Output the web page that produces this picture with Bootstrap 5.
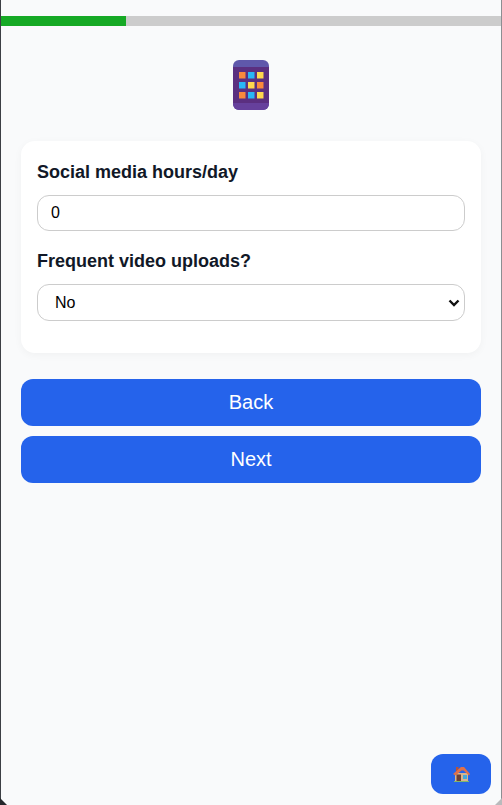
<!DOCTYPE html>
<html lang="en">
<head>
  <meta charset="UTF-8" />
  <meta name="viewport" content="width=device-width, initial-scale=1" />
  <title>Device usage</title>
  <link href="https://cdn.jsdelivr.net/npm/bootstrap@5.3.2/dist/css/bootstrap.min.css" rel="stylesheet" />
  <style>
    html, body { height: 100%; }
    body {
      background: #f9fafb;
      font-family: "Liberation Sans", Arial, sans-serif;
      color: #111827;
      border-left: 1px solid #3c3f44;
      border-right: 1px solid #8c8e92;
      padding-top: 16px;
      overflow: hidden;
    }
    .step-track { height: 10px; background: #cccccc; border-radius: 0; margin-left: -1px; }
    .step-fill { background: #16a925; }
    .page-icon { margin-top: 34px; height: 50px; }
    .form-panel {
      margin: 31px 20px 0;
      padding: 21px 16px 32px;
      background: #fff;
      border-radius: 14px;
      box-shadow: 0 2px 8px rgba(0, 0, 0, .04);
    }
    .field-label { font-size: 18px; font-weight: 700; line-height: 21px; margin-bottom: 12px; display: block; }
    .field-input {
      height: 36px;
      padding: 0 13px;
      font-size: 16px;
      color: #000;
      border: 1px solid #cccccc;
      border-radius: 12px;
      margin-bottom: 20px;
    }
    select.field-input {
      height: 37px;
      padding: 0 13px 0 17px;
      margin-bottom: 0;
      background-position: right 2px center;
      background-size: 16px 12px;
      background-image: url("data:image/svg+xml,%3csvg xmlns='http://www.w3.org/2000/svg' viewBox='0 0 16 12'%3e%3cpath fill='none' stroke='%23111' stroke-width='2.4' d='M3.5 3.5 8 8l4.500-4.500'/%3e%3c/svg%3e");
    }
    .action-stack { margin: 26px 20px 0; gap: 10px; }
    .action-btn {
      height: 47px;
      padding: 0 0 2px;
      font-size: 20px;
      color: #fff;
      background: #2563eb;
      border: 0;
      border-radius: 12px;
    }
    .home-btn {
      position: fixed;
      right: 11px;
      bottom: 11px;
      width: 60px;
      height: 40px;
      padding: 0;
      background: #2563eb;
      border: 0;
      border-radius: 12px;
    }
    .corner-left, .corner-right {
      position: fixed;
      bottom: 0;
      width: 7px;
      height: 7px;
    }
    .corner-left { left: 0; background: #24272b; clip-path: polygon(0 0, 100% 100%, 0 100%); }
    .corner-right { right: 0; background: #b9babc; clip-path: polygon(100% 0, 100% 100%, 0 100%); }
  </style>
</head>
<body>
  <div class="progress step-track">
    <div class="progress-bar step-fill" style="width: 25.2%"></div>
  </div>

  <div class="page-icon d-flex justify-content-center">
    <svg width="36" height="50" viewBox="0 0 36 50" aria-hidden="true">
      <rect width="36" height="50" rx="6" fill="#5f58ab"/>
      <rect y="7" width="36" height="36" fill="#5b2f80"/>
      <path d="M0 43h36v1a6 6 0 0 1-6 6H6a6 6 0 0 1-6-6z" fill="#66409c"/>
      <rect x="6" y="12" width="6.500" height="6.500" fill="#f98a3c"/>
      <rect x="15" y="12" width="6.500" height="6.500" fill="#29b6f6"/>
      <rect x="24" y="12" width="6.500" height="6.500" fill="#ffd84d"/>
      <rect x="6" y="22" width="6.500" height="6.500" fill="#29b6f6"/>
      <rect x="15" y="22" width="6.500" height="6.500" fill="#ffd84d"/>
      <rect x="24" y="22" width="6.500" height="6.500" fill="#f98a3c"/>
      <rect x="6" y="32" width="6.500" height="6.500" fill="#f98a3c"/>
      <rect x="15" y="32" width="6.500" height="6.500" fill="#29b6f6"/>
      <rect x="24" y="32" width="6.500" height="6.500" fill="#ffd84d"/>
    </svg>
  </div>

  <form class="form-panel">
    <label class="field-label" for="socialHours">Social media hours/day</label>
    <input id="socialHours" type="number" class="form-control field-input" value="0" />
    <label class="field-label" for="videoUploads">Frequent video uploads?</label>
    <select id="videoUploads" class="form-select field-input">
      <option>No</option>
      <option>Yes</option>
    </select>
  </form>

  <div class="action-stack d-grid">
    <button class="btn action-btn" type="button">Back</button>
    <button class="btn action-btn" type="button">Next</button>
  </div>

  <button class="btn home-btn d-flex align-items-center justify-content-center" type="button" aria-label="Home">
    <svg width="17" height="16" viewBox="0 0 17 16" aria-hidden="true">
      <path d="M2 7h13v8H2z" fill="#d9b48e"/>
      <path d="M3 1h2.500v4H3z" fill="#b5533c"/>
      <path d="M0 8 8 1l3 0 6 7-1 1.500-5.500-5-2 0-6 5z" fill="#e0704a"/>
      <path d="M3.500 8.500H8V15H3.500z" fill="#6a4038"/>
      <path d="M10 9h4v4h-4z" fill="#45a8dc"/>
      <path d="M1 15h15v1H1z" fill="#7fb56e"/>
    </svg>
  </button>
  <div class="corner-left"></div>
  <div class="corner-right"></div>

  <script src="https://cdn.jsdelivr.net/npm/bootstrap@5.3.2/dist/js/bootstrap.bundle.min.js"></script>
</body>
</html>
